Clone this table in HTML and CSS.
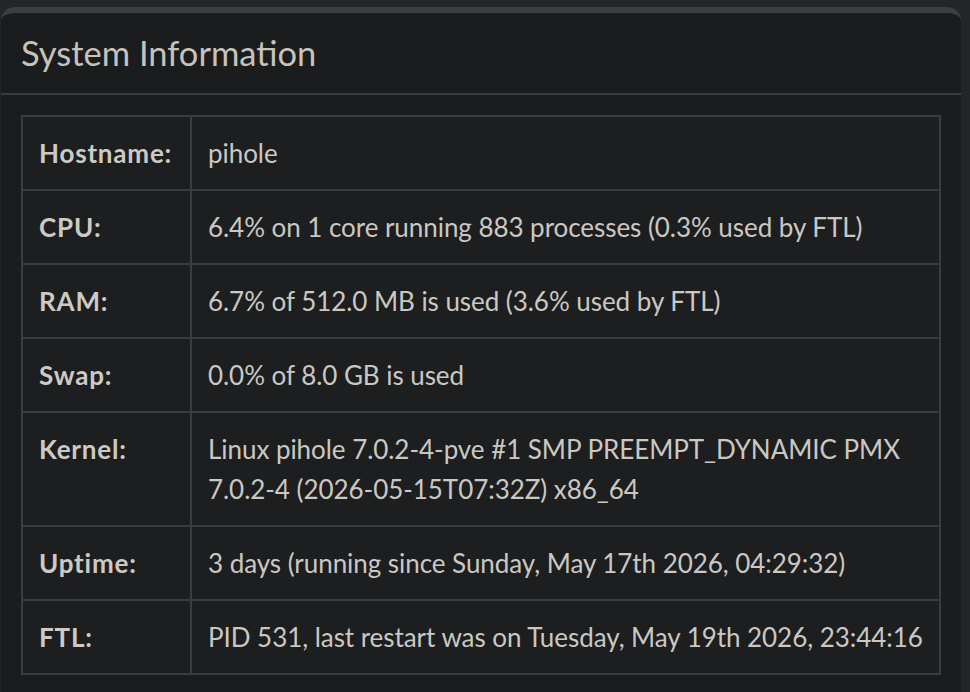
FILE: index.html
```html
<!DOCTYPE html>
<html lang="en">
<head>
<meta charset="utf-8">
<title>System Information</title>
<link rel="stylesheet" href="styles.css">
</head>
<body>
<div class="card">
  <div class="card-header">
    <h3 class="card-title">System Information</h3>
  </div>
  <div class="card-body">
    <table class="info-table">
      <colgroup><col class="col-label"><col></colgroup>
      <tbody>
        <tr><th>Hostname:</th><td>pihole</td></tr>
        <tr><th>CPU:</th><td>6.4% on 1 core running 883 processes (0.3% used by FTL)</td></tr>
        <tr><th>RAM:</th><td>6.7% of 512.0 MB is used (3.6% used by FTL)</td></tr>
        <tr><th>Swap:</th><td>0.0% of 8.0 GB is used</td></tr>
        <tr><th>Kernel:</th><td>Linux pihole 7.0.2-4-pve #1 SMP PREEMPT_DYNAMIC PMX 7.0.2-4 (2026-05-15T07:32Z) x86_64</td></tr>
        <tr><th>Uptime:</th><td>3 days (running since Sunday, May 17th 2026, 04:29:32)</td></tr>
        <tr><th>FTL:</th><td>PID 531, last restart was on Tuesday, May 19th 2026, 23:44:16</td></tr>
      </tbody>
    </table>
  </div>
</div>
</body>
</html>
```
FILE: styles.css
```css
html, body {
  margin: 0;
  height: 100%;
}
body {
  background: #232528;
  padding: 7px 9px 0 1px;
  box-sizing: border-box;
  overflow: hidden;
  font-family: Lato, "Open Sans", sans-serif;
  color: #cbc8c2;
}
.card {
  background: #1b1c1e;
  border-top: 6px solid #3c3f42;
  border-radius: 14px 14px 0 0;
  min-height: 700px;
}
.card-header {
  padding: 20px 20px;
  border-bottom: 2px solid #3a3b3d;
}
.card-title {
  margin: 0;
  font-size: 34.5px;
  line-height: 40px;
  font-weight: 400;
  color: #c6c2bc;
}
.card-body {
  padding: 20px;
}
.info-table {
  width: 100%;
  border-collapse: collapse;
  table-layout: fixed;
  border: 2px solid #3b3c3e;
  background: #1d1e20;
  font-size: 26px;
  line-height: 40px;
}
.col-label {
  width: 169px;
}
.info-table th,
.info-table td {
  border: 2px solid #3b3c3e;
  padding: 16px;
  text-align: left;
  vertical-align: top;
}
.info-table td {
  padding-right: 4px;
  letter-spacing: -0.05px;
}
.info-table th {
  font-weight: 700;
  letter-spacing: 0.8px;
  color: #cdcac4;
}
```
